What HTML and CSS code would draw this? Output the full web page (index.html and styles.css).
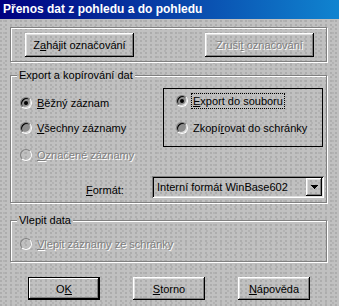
FILE: index.html
```html
<!DOCTYPE html>
<html lang="cs">
<head>
  <meta charset="UTF-8">
  <title>Přenos dat z pohledu a do pohledu</title>
  <link rel="stylesheet" href="styles.css">
</head>
<body>

  <div class="window">
    <div class="titlebar">Přenos dat z pohledu a do pohledu</div>

    <div class="content">
      <div class="group actions">
        <button class="btn wide">Z<u>a</u>hájit označování</button>
        <button class="btn wide" disabled>Zruši<u>t</u> označování</button>
      </div>

      <div class="group export">
        <div class="group-title">Export a kopírování dat</div>
        <div class="export-grid">
          <div class="options">
            <label class="option"><span class="radio checked"></span><span class="text"><u>B</u>ěžný záznam</span></label>
            <label class="option"><span class="radio"></span><span class="text"><u>V</u>šechny záznamy</span></label>
            <label class="option disabled"><span class="radio"></span><span class="text"><u>O</u>značené záznamy</span></label>
          </div>
          <div class="target">
            <label class="option"><span class="radio checked"></span><span class="text focus"><u>E</u>xport do souboru</span></label>
            <label class="option"><span class="radio"></span><span class="text">Zkopí<u>r</u>ovat do schránky</span></label>
          </div>
        </div>
        <div class="format-row">
          <span class="format-label"><u>F</u>ormát:</span>
          <div class="combo">
            <span class="combo-value">Interní formát WinBase602</span>
            <span class="combo-btn">
              <svg width="7" height="4" viewBox="0 0 7 4" shape-rendering="crispEdges">
                <path d="M0 0h7v1h-1v1h-1v1h-1v1h-1v-1h-1v-1h-1v-1h-1z" fill="#000"/>
              </svg>
            </span>
          </div>
        </div>
      </div>

      <div class="group paste">
        <div class="group-title">Vlepit data</div>
        <div class="paste-row">
          <label class="option disabled"><span class="radio"></span><span class="text"><u>V</u>lepit záznamy ze schránky</span></label>
        </div>
      </div>

      <div class="buttons">
        <button class="btn small default">O<u>K</u></button>
        <button class="btn small"><u>S</u>torno</button>
        <button class="btn small"><u>N</u>ápověda</button>
      </div>
    </div>
  </div>

</body>
</html>
```

FILE: styles.css
```css
* {
  box-sizing: border-box;
}

body {
  margin: 0;
}

.window,
.group-title {
  background-color: #c0c0c0;
  background-image:
    radial-gradient(circle at 1px 1px, #acacac 0.7px, transparent 1px),
    radial-gradient(circle at 1px 1px, #b2b2b2 0.7px, transparent 1px);
  background-size: 5px 4px, 7px 6px;
  background-position: 0 0, 3px 2px;
  background-attachment: fixed;
}

.window {
  width: 339px;
  height: 306px;
  overflow: hidden;
  font-family: "Liberation Sans", Arial, sans-serif;
  font-size: 11px;
  color: #000;
}

.titlebar {
  height: 19px;
  line-height: 19px;
  padding-left: 3px;
  background: linear-gradient(to right, #000080, #1084d0);
  color: #fff;
  font-weight: bold;
  font-size: 12px;
  white-space: nowrap;
}

.content {
  padding: 8px 12px 0 10px;
}

/* etched frame */
.group {
  border: 1px solid #808080;
  box-shadow: 1px 1px 0 #fff, inset 1px 1px 0 #fff;
}

.group-title {
  width: fit-content;
  margin: -7px 0 0 6px;
  padding: 0 2px;
  line-height: 13px;
  white-space: nowrap;
}

.actions {
  height: 35px;
  display: flex;
  justify-content: space-between;
  align-items: flex-start;
  padding: 5px 12px 0 14px;
}

.btn {
  padding: 0;
  border: 0;
  background: transparent;
  font-family: "Liberation Sans", Arial, sans-serif;
  font-size: 11px;
  color: #000;
  box-shadow: inset -1px -1px 0 #000, inset 1px 1px 0 #fff, inset -2px -2px 0 #808080, inset 2px 2px 0 #dfdfdf;
}

.btn:disabled {
  color: #808080;
  text-shadow: 1px 1px 0 #fff;
}

.btn.wide {
  width: 109px;
  height: 24px;
}

.btn.small {
  width: 72px;
  height: 23px;
}

.btn.default {
  border: 1px solid #000;
  box-shadow: inset -1px -1px 0 #000, inset 1px 1px 0 #fff, inset -2px -2px 0 #808080;
}

.export {
  margin-top: 13px;
  padding-bottom: 4px;
}

.export-grid {
  display: grid;
  grid-template-columns: 1fr 160px;
  align-items: start;
  margin-top: 6px;
  padding-right: 3px;
}

.options {
  display: flex;
  flex-direction: column;
  padding: 7px 0 0 9px;
}

.options .option:nth-child(2) {
  margin-top: 9px;
}

.options .option:nth-child(3) {
  margin-top: 11px;
}

.option {
  display: flex;
  align-items: center;
  height: 16px;
  white-space: nowrap;
}

.radio {
  flex: none;
  display: flex;
  align-items: center;
  justify-content: center;
  width: 12px;
  height: 12px;
  border-radius: 50%;
  border: 1px solid;
  border-color: #808080 #fff #fff #808080;
  box-shadow: inset 1px 1px 0 #000, inset -1px -1px 0 #dfdfdf;
  background: #8e8e8e;
}

.radio.checked::after {
  content: "";
  width: 4px;
  height: 4px;
  border-radius: 50%;
  background: #000;
}

.text {
  margin-left: 3px;
  padding: 0 1px;
  border: 1px solid transparent;
  line-height: 14px;
}

.text.focus {
  border: 1px dotted #000;
}

.option.disabled .radio {
  box-shadow: none;
  background: transparent;
}

.option.disabled .text {
  color: #808080;
  text-shadow: 1px 1px 0 #fff;
}

.target {
  height: 59px;
  border: 1px solid #000;
  padding: 4px 0 0 12px;
}

.target .option + .option {
  margin-top: 11px;
}

.format-row {
  display: flex;
  align-items: flex-start;
  margin-top: 13px;
  padding: 0 2px 0 75px;
}

.format-label {
  margin-top: 7px;
  line-height: 14px;
}

.combo {
  display: flex;
  align-items: center;
  width: 172px;
  height: 22px;
  margin-left: auto;
  padding: 2px;
  box-shadow: inset 1px 1px 0 #808080, inset -1px -1px 0 #fff, inset 2px 2px 0 #000, inset -2px -2px 0 #dfdfdf;
}

.combo-value {
  flex: 1;
  padding-left: 3px;
  line-height: 14px;
  white-space: nowrap;
}

.combo-btn {
  display: flex;
  align-items: center;
  justify-content: center;
  width: 16px;
  height: 18px;
  box-shadow: inset -1px -1px 0 #000, inset 1px 1px 0 #fff, inset -2px -2px 0 #808080, inset 2px 2px 0 #dfdfdf;
}

.paste {
  margin-top: 17px;
  padding-bottom: 9px;
}

.paste-row {
  margin-top: 9px;
  padding-left: 9px;
}

.buttons {
  display: flex;
  gap: 33px;
  margin-top: 15px;
  padding-left: 18px;
}
```
